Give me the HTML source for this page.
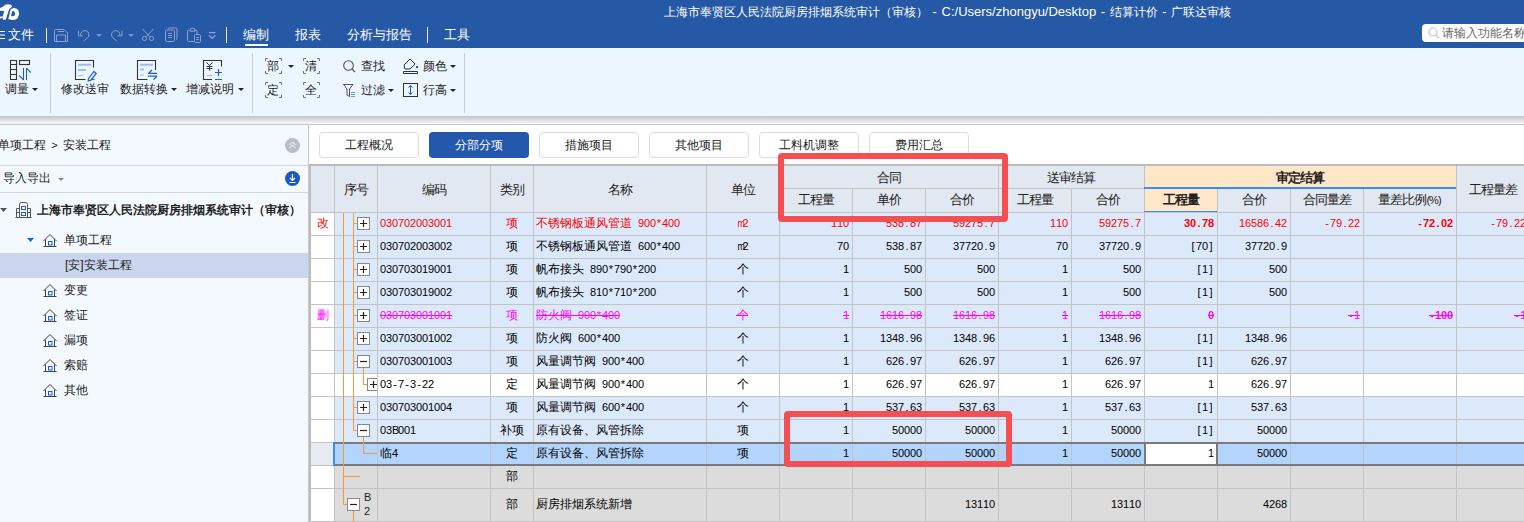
<!DOCTYPE html><html><head><meta charset="utf-8"><style>
*{margin:0;padding:0;box-sizing:border-box}
html,body{width:1524px;height:522px;overflow:hidden;background:#fff}
body{position:relative;font-family:"Liberation Sans",sans-serif;color:#222}
div{position:absolute}
.t{white-space:nowrap;line-height:1}
.m{font-family:"Liberation Mono",monospace;font-size:11px;letter-spacing:-0.6px}
.c{font-size:12px}
.t u{display:inline-block;width:1em;text-decoration:none;text-align:center}
svg{position:absolute;overflow:visible}
.g{font-size:11px;line-height:11px;white-space:nowrap}.g i{display:inline-block;width:6px;text-align:center;font-style:normal}.g b{display:inline-block;width:12px;font-size:12px;font-weight:normal;text-align:center}.gb i{font-weight:bold}.g i.n{transform:scaleX(0.8)}.h u{width:12px}.nf u,.nf .g b{transform:scale(1.45,1.3)}</style></head><body><div style="left:0px;top:0px;width:1524px;height:48px;background:#2559a5"></div>
<svg style="left:0;top:0" width="24" height="24"><path fill-rule="evenodd" fill="#fff" d="M8.3 19.3L10.6 9.6Q11.5 8 14 8Q19 8.3 19 13.8Q18.9 19.9 13.3 19.9Z M11.1 16.2L11.9 12Q12.3 11.1 13.3 11.1Q15.1 11.3 15.1 13.7Q15 16.2 12.9 16.2Z"/><path fill-rule="evenodd" fill="#fff" d="M2.7 19.7L5.9 19.6L8.6 10.8Q9.5 7.6 12.4 6.4Q11.6 4.2 8.2 4.2Q4.8 4.2 3.3 6.5Q1.5 7.6 -0.5 8V18.6Q1.2 18.6 2.9 17.6Z M-0.5 10.8Q1.5 10.4 4.2 11L2.7 16.4Q1.5 16.6 -0.5 16.4Z"/></svg>
<div class="t" style="left:664px;top:5px;color:#fff;font-size:13px;word-spacing:1px"><span style="font-size:12px"><u>上</u><u>海</u><u>市</u><u>奉</u><u>贤</u><u>区</u><u>人</u><u>民</u><u>法</u><u>院</u><u>厨</u><u>房</u><u>排</u><u>烟</u><u>系</u><u>统</u><u>审</u><u>计</u><u>（</u><u>审</u><u>核</u><u>）</u></span> - C:/Users/zhongyu/Desktop - <span style="font-size:12px"><u>结</u><u>算</u><u>计</u><u>价</u></span> - <span style="font-size:12px"><u>广</u><u>联</u><u>达</u><u>审</u><u>核</u></span></div>
<svg style="left:0;top:30px" width="6" height="10"><path d="M0 1.5H5M0 5H5M0 8.5H5" stroke="#fff" stroke-width="1"/></svg>
<div class="t" style="left:8px;top:28px;color:#fff;font-size:13px"><u>文</u><u>件</u></div>
<div style="left:46px;top:28px;width:1px;height:15px;background:#e8eef8"></div>
<svg style="left:54px;top:29px" width="15" height="14"><path d="M0.5 1.5Q0.5 0.5 1.5 0.5H10L13.5 4V12.5H0.5Z M2.5 12.5V6H11.5V12.5 M4 2.5H10" fill="none" stroke="#8aa2d0" stroke-width="1"/></svg>
<svg style="left:77px;top:29px" width="14" height="14"><path d="M3.6 6.2A4.2 4.2 0 1 1 10.6 8.8L6.6 12" fill="none" stroke="#8aa2d0" stroke-width="1"/><path d="M1.5 1.8V6.8H6" fill="none" stroke="#8aa2d0" stroke-width="1"/></svg>
<svg style="left:96px;top:34px" width="6" height="4"><path d="M0 0H6L3 3Z" fill="#6d8fe0"/></svg>
<svg style="left:110px;top:29px" width="14" height="14"><g transform="translate(13.5,0) scale(-1,1)"><path d="M3.6 6.2A4.2 4.2 0 1 1 10.6 8.8L6.6 12" fill="none" stroke="#8aa2d0" stroke-width="1"/><path d="M1.5 1.8V6.8H6" fill="none" stroke="#8aa2d0" stroke-width="1"/></g></svg>
<svg style="left:128px;top:34px" width="6" height="4"><path d="M0 0H6L3 3Z" fill="#6d8fe0"/></svg>
<svg style="left:140px;top:27px" width="16" height="17"><path d="M2.5 2L10 9.8M13.5 2L6 9.8" fill="none" stroke="#8aa2d0" stroke-width="1"/><circle cx="4.5" cy="11.5" r="2.1" fill="none" stroke="#8aa2d0"/><circle cx="11.5" cy="11.5" r="2.1" fill="none" stroke="#8aa2d0"/></svg>
<svg style="left:164px;top:27px" width="15" height="17"><path d="M3.8 1.8Q4 1 5 1H12Q13 1 13 2V11.5Q13 12.5 12 12.6" fill="none" stroke="#8aa2d0"/><rect x="1.5" y="3" width="9" height="11.5" rx="1.2" fill="#2559a5" stroke="#8aa2d0"/><path d="M4 6.5H8M4 8.5H8M4 10.5H8" stroke="#8aa2d0" stroke-width="0.9"/></svg>
<svg style="left:186px;top:27px" width="17" height="17"><path d="M3.5 3H2.5Q1.5 3 1.5 4V13.5Q1.5 14.5 2.5 14.5H8.5M8 3H10Q11 3 11 4V7" fill="none" stroke="#8aa2d0"/><path d="M4 4.2V2.8Q4 1.2 6.5 1.2Q9 1.2 9 2.8V4.2Z" fill="none" stroke="#8aa2d0"/><rect x="8.5" y="7.5" width="6" height="8" rx="1.2" fill="#2559a5" stroke="#8aa2d0"/><path d="M10 10.5H13M10 12.5H13" stroke="#8aa2d0" stroke-width="0.9"/></svg>
<svg style="left:208px;top:31px" width="9" height="9"><path d="M1 1.6H7.5" stroke="#8aa2d0" stroke-width="1.3"/><path d="M1.2 4.3L4.2 7.4L7.3 4.3" fill="none" stroke="#8aa2d0" stroke-width="1.3"/></svg>
<div style="left:226px;top:27px;width:1px;height:16px;background:#e8eef8"></div>
<div class="t" style="left:243px;top:28px;color:#fff;font-size:13px"><u>编</u><u>制</u></div>
<div style="left:245px;top:44px;width:23px;height:2px;background:#fff"></div>
<div class="t" style="left:295px;top:28px;color:#fff;font-size:13px"><u>报</u><u>表</u></div>
<div class="t" style="left:347px;top:28px;color:#fff;font-size:13px"><u>分</u><u>析</u><u>与</u><u>报</u><u>告</u></div>
<div style="left:427px;top:27px;width:1px;height:16px;background:#e8eef8"></div>
<div class="t" style="left:444px;top:28px;color:#fff;font-size:13px"><u>工</u><u>具</u></div>
<div style="left:1422px;top:24px;width:110px;height:18px;background:#fff;border-radius:4px"></div>
<svg style="left:1428px;top:27px" width="12" height="12"><circle cx="5" cy="5" r="4" fill="none" stroke="#c8c8c8" stroke-width="1.2"/><path d="M8 8L11 11" stroke="#c8c8c8" stroke-width="1.5"/></svg>
<div class="t" style="left:1442px;top:27px;color:#666;font-size:12px"><u>请</u><u>输</u><u>入</u><u>功</u><u>能</u><u>名</u><u>称</u></div>
<div style="left:0px;top:48px;width:1524px;height:68px;background:#ecf6fe"></div>
<div style="left:0px;top:116px;width:1524px;height:8px;background:linear-gradient(#c3c4c9,#fafafa)"></div>
<div style="left:0px;top:124px;width:1524px;height:1px;background:#c6c7cb"></div>
<div style="left:50px;top:53px;width:1px;height:60px;background:#c9cdd2"></div>
<div style="left:252px;top:53px;width:1px;height:60px;background:#c9cdd2"></div>
<div style="left:464px;top:53px;width:1px;height:60px;background:#c9cdd2"></div>
<svg style="left:10px;top:60px" width="24" height="22"><path d="M0.5 0.5H6.5V19.5H0.5Z M0.5 4.5H6.5M0.5 9.5H6.5M0.5 14.5H6.5" fill="none" stroke="#333" stroke-width="1.1"/><rect x="9.5" y="0.5" width="10" height="4" fill="none" stroke="#333" stroke-width="1.1"/><path d="M13.5 8V20M9.2 15.5L13.5 19.8 M16.5 8V20M16.5 8.2L20.7 12.5" fill="none" stroke="#1a5fd0" stroke-width="1.1"/></svg>
<div class="t" style="left:5px;top:83px;font-size:12px;color:#222"><u>调</u><u>量</u></div>
<svg style="left:32px;top:88px" width="6" height="4"><path d="M0 0H6L3 3Z" fill="#222"/></svg>
<svg style="left:75px;top:60px" width="24" height="24"><path d="M18.5 7.5V0.5H0.5V19.5H10.5" fill="none" stroke="#333" stroke-width="1.1"/><path d="M3 4.8H16M3 10H11" stroke="#9dbcf5" stroke-width="2"/><path d="M3 15.5H8" stroke="#9dbcf5" stroke-width="1"/><path d="M13.5 18.5L19 11.5L21.2 13.5L15.6 20.4L13.2 21Z" fill="none" stroke="#1a5fd0" stroke-width="1.2"/><path d="M16.5 19.5H19.5" stroke="#1a5fd0" stroke-width="1.2"/></svg>
<div class="t" style="left:61px;top:83px;font-size:12px"><u>修</u><u>改</u><u>送</u><u>审</u></div>
<svg style="left:137px;top:60px" width="24" height="24"><path d="M18.5 10V0.5H0.5V19.5H10.5" fill="none" stroke="#333" stroke-width="1.1"/><path d="M3 4.8H16M3 9.5H7" stroke="#9dbcf5" stroke-width="2"/><path d="M3 15H7" stroke="#9dbcf5" stroke-width="1"/><path d="M11 13.4H20M12 13L15 10M11 16.2H20M20 16.2L16.5 19.5" fill="none" stroke="#1a5fd0" stroke-width="1.2"/></svg>
<div class="t" style="left:120px;top:83px;font-size:12px"><u>数</u><u>据</u><u>转</u><u>换</u></div>
<svg style="left:171px;top:88px" width="6" height="4"><path d="M0 0H6L3 3Z" fill="#222"/></svg>
<svg style="left:203px;top:60px" width="24" height="24"><path d="M18.5 6.5V0.5H0.5V19.5H9" fill="none" stroke="#333" stroke-width="1.1"/><path d="M3.5 2.5L6.5 5.5L9.5 2.5M6.5 5.5V10.5M3.5 6.5H9.5M3.5 8.5H9.5" fill="none" stroke="#333" stroke-width="1"/><path d="M4 15.5H9" stroke="#9dbcf5" stroke-width="1.2"/><path d="M12 12.5H19M15.5 9V16M12 19.5H19" stroke="#1a5fd0" stroke-width="1.2"/></svg>
<div class="t" style="left:186px;top:83px;font-size:12px"><u>增</u><u>减</u><u>说</u><u>明</u></div>
<svg style="left:238px;top:88px" width="6" height="4"><path d="M0 0H6L3 3Z" fill="#222"/></svg>
<svg style="left:265px;top:58px" width="17" height="16"><path d="M3 0.5H0.5V3 M14 0.5H16.5V3 M0.5 13V15.5H3 M16.5 13V15.5H14" fill="none" stroke="#777"/></svg>
<div class="t" style="left:267px;top:60px;font-size:12px"><u>部</u></div>
<svg style="left:303px;top:58px" width="17" height="16"><path d="M3 0.5H0.5V3 M14 0.5H16.5V3 M0.5 13V15.5H3 M16.5 13V15.5H14" fill="none" stroke="#777"/></svg>
<div class="t" style="left:305px;top:60px;font-size:12px"><u>清</u></div>
<svg style="left:265px;top:82px" width="17" height="16"><path d="M3 0.5H0.5V3 M14 0.5H16.5V3 M0.5 13V15.5H3 M16.5 13V15.5H14" fill="none" stroke="#777"/></svg>
<div class="t" style="left:267px;top:84px;font-size:12px"><u>定</u></div>
<svg style="left:303px;top:82px" width="17" height="16"><path d="M3 0.5H0.5V3 M14 0.5H16.5V3 M0.5 13V15.5H3 M16.5 13V15.5H14" fill="none" stroke="#777"/></svg>
<div class="t" style="left:305px;top:84px;font-size:12px"><u>全</u></div>
<svg style="left:288px;top:65px" width="6" height="4"><path d="M0 0H6L3 3Z" fill="#222"/></svg>
<svg style="left:343px;top:60px" width="13" height="13"><circle cx="5.5" cy="5.5" r="4.8" fill="none" stroke="#555" stroke-width="1.1"/><path d="M9 9L12 12" stroke="#555" stroke-width="1.3"/></svg>
<div class="t" style="left:361px;top:60px;font-size:12px"><u>查</u><u>找</u></div>
<svg style="left:343px;top:84px" width="14" height="13"><path d="M0.5 0.5H10L6.5 5V12.5L4 11V5Z" fill="none" stroke="#555"/><path d="M8 8.5H12M8 10.5H12M8 12.5H12" stroke="#1a5fd0" stroke-width="0.6"/></svg>
<div class="t" style="left:361px;top:84px;font-size:12px"><u>过</u><u>滤</u></div>
<svg style="left:388px;top:89px" width="6" height="4"><path d="M0 0H6L3 3Z" fill="#222"/></svg>
<svg style="left:403px;top:58px" width="16" height="16"><path d="M1 7L7 1L12 6L7 11H2Z" fill="none" stroke="#333"/><path d="M0.5 13.5H14.5V15.5H0.5Z" fill="none" stroke="#333"/><rect x="13" y="8" width="2" height="2" fill="#1a5fd0"/></svg>
<div class="t" style="left:423px;top:60px;font-size:12px"><u>颜</u><u>色</u></div>
<svg style="left:450px;top:65px" width="6" height="4"><path d="M0 0H6L3 3Z" fill="#222"/></svg>
<svg style="left:403px;top:83px" width="16" height="14"><rect x="0.5" y="0.5" width="14" height="13" fill="none" stroke="#333"/><path d="M7.5 2.5V11.5M5.5 4.5L7.5 2.5L9.5 4.5M5.5 9.5L7.5 11.5L9.5 9.5" fill="none" stroke="#1a5fd0"/></svg>
<div class="t" style="left:423px;top:84px;font-size:12px"><u>行</u><u>高</u></div>
<svg style="left:450px;top:89px" width="6" height="4"><path d="M0 0H6L3 3Z" fill="#222"/></svg>
<div style="left:0px;top:125px;width:308px;height:397px;background:#f3f9fe"></div>
<div style="left:308px;top:125px;width:1px;height:397px;background:#c8c8c8"></div>
<div class="t" style="left:-2px;top:139px;font-size:12px"><u>单</u><u>项</u><u>工</u><u>程</u> <span style="font-size:11px;margin:0 2px">&gt;</span> <u>安</u><u>装</u><u>工</u><u>程</u></div>
<svg style="left:285px;top:138px" width="15" height="15"><circle cx="7.5" cy="7.5" r="7.5" fill="#b9bfc9"/><path d="M4.5 7L7.5 4L10.5 7M4.5 10L7.5 7L10.5 10" fill="none" stroke="#fff" stroke-width="1"/></svg>
<div style="left:0px;top:165px;width:308px;height:1px;background:#d4d7db"></div>
<div class="t" style="left:3px;top:172px;font-size:12px"><u>导</u><u>入</u><u>导</u><u>出</u></div>
<svg style="left:58px;top:178px" width="6" height="4"><path d="M0 0H6L3 3Z" fill="#888"/></svg>
<svg style="left:285px;top:171px" width="15" height="15"><circle cx="7.5" cy="7.5" r="7.5" fill="#1958c9"/><path d="M7.5 3V9.5M5 7L7.5 9.5L10 7M4.5 11.5H10.5" fill="none" stroke="#fff" stroke-width="1.2"/></svg>
<div style="left:0px;top:192px;width:308px;height:1px;background:#d4d7db"></div>
<svg style="left:0;top:208px" width="7" height="5"><path d="M0 0H7L3.5 4Z" fill="#555"/></svg>
<svg style="left:15px;top:202px" width="17" height="17"><path d="M0.5 15.5H16.5 M4.5 15V2.5Q4.5 0.5 6.5 0.5H10.5Q12.5 0.5 12.5 2.5V15 M1.5 15V6.5H4.5M1.5 10.5H4.5 M12.5 6.5H15.5V15M12.5 10.5H15.5" fill="none" stroke="#555"/><rect x="6.5" y="4.5" width="4" height="3" fill="none" stroke="#1a5fd0"/><rect x="6.5" y="10.5" width="4" height="3" fill="none" stroke="#1a5fd0"/></svg>
<div class="t" style="left:37px;top:204px;font-size:12px;font-weight:bold"><u>上</u><u>海</u><u>市</u><u>奉</u><u>贤</u><u>区</u><u>人</u><u>民</u><u>法</u><u>院</u><u>厨</u><u>房</u><u>排</u><u>烟</u><u>系</u><u>统</u><u>审</u><u>计</u><u>（</u><u>审</u><u>核</u><u>）</u></div>
<svg style="left:27px;top:238px" width="7" height="5"><path d="M0 0H7L3.5 4Z" fill="#1a5fe0"/></svg>
<svg style="left:43px;top:234px" width="15" height="15"><path d="M0.5 7L7 0.5L13.5 7 M2.5 5.5V12.5H11.5V5.5 M0.5 12.5H13.5" fill="none" stroke="#444" stroke-width="1"/><rect x="5.5" y="7.5" width="3.5" height="3.5" fill="none" stroke="#1a5fd0" stroke-width="1"/></svg>
<div class="t" style="left:64px;top:234px;font-size:12px"><u>单</u><u>项</u><u>工</u><u>程</u></div>
<div style="left:0px;top:253px;width:308px;height:25px;background:#c9d6ee"></div>
<div class="t" style="left:65px;top:259px;font-size:12px">[<u>安</u>]<u>安</u><u>装</u><u>工</u><u>程</u></div>
<svg style="left:43px;top:284px" width="15" height="15"><path d="M0.5 7L7 0.5L13.5 7 M2.5 5.5V12.5H11.5V5.5 M0.5 12.5H13.5" fill="none" stroke="#444" stroke-width="1"/><rect x="5.5" y="7.5" width="3.5" height="3.5" fill="none" stroke="#1a5fd0" stroke-width="1"/></svg>
<div class="t" style="left:64px;top:284px;font-size:12px"><u>变</u><u>更</u></div>
<svg style="left:43px;top:309px" width="15" height="15"><path d="M0.5 7L7 0.5L13.5 7 M2.5 5.5V12.5H11.5V5.5 M0.5 12.5H13.5" fill="none" stroke="#444" stroke-width="1"/><rect x="5.5" y="7.5" width="3.5" height="3.5" fill="none" stroke="#1a5fd0" stroke-width="1"/></svg>
<div class="t" style="left:64px;top:309px;font-size:12px"><u>签</u><u>证</u></div>
<svg style="left:43px;top:334px" width="15" height="15"><path d="M0.5 7L7 0.5L13.5 7 M2.5 5.5V12.5H11.5V5.5 M0.5 12.5H13.5" fill="none" stroke="#444" stroke-width="1"/><rect x="5.5" y="7.5" width="3.5" height="3.5" fill="none" stroke="#1a5fd0" stroke-width="1"/></svg>
<div class="t" style="left:64px;top:334px;font-size:12px"><u>漏</u><u>项</u></div>
<svg style="left:43px;top:359px" width="15" height="15"><path d="M0.5 7L7 0.5L13.5 7 M2.5 5.5V12.5H11.5V5.5 M0.5 12.5H13.5" fill="none" stroke="#444" stroke-width="1"/><rect x="5.5" y="7.5" width="3.5" height="3.5" fill="none" stroke="#1a5fd0" stroke-width="1"/></svg>
<div class="t" style="left:64px;top:359px;font-size:12px"><u>索</u><u>赔</u></div>
<svg style="left:43px;top:384px" width="15" height="15"><path d="M0.5 7L7 0.5L13.5 7 M2.5 5.5V12.5H11.5V5.5 M0.5 12.5H13.5" fill="none" stroke="#444" stroke-width="1"/><rect x="5.5" y="7.5" width="3.5" height="3.5" fill="none" stroke="#1a5fd0" stroke-width="1"/></svg>
<div class="t" style="left:64px;top:384px;font-size:12px"><u>其</u><u>他</u></div>
<div style="left:309px;top:125px;width:1215px;height:39px;background:#fff"></div>
<div style="left:319px;top:132px;width:100px;height:26px;background:#fff;border:1px solid #dcdcdc;border-radius:4px"></div>
<div class="t" style="left:319px;top:139px;width:100px;text-align:center;font-size:12px;color:#222"><u>工</u><u>程</u><u>概</u><u>况</u></div>
<div style="left:429px;top:132px;width:100px;height:26px;background:#2358ad;border-radius:4px"></div>
<div class="t" style="left:429px;top:139px;width:100px;text-align:center;font-size:12px;color:#fff"><u>分</u><u>部</u><u>分</u><u>项</u></div>
<div style="left:539px;top:132px;width:100px;height:26px;background:#fff;border:1px solid #dcdcdc;border-radius:4px"></div>
<div class="t" style="left:539px;top:139px;width:100px;text-align:center;font-size:12px;color:#222"><u>措</u><u>施</u><u>项</u><u>目</u></div>
<div style="left:649px;top:132px;width:100px;height:26px;background:#fff;border:1px solid #dcdcdc;border-radius:4px"></div>
<div class="t" style="left:649px;top:139px;width:100px;text-align:center;font-size:12px;color:#222"><u>其</u><u>他</u><u>项</u><u>目</u></div>
<div style="left:759px;top:132px;width:100px;height:26px;background:#fff;border:1px solid #dcdcdc;border-radius:4px"></div>
<div class="t" style="left:759px;top:139px;width:100px;text-align:center;font-size:12px;color:#222"><u>工</u><u>料</u><u>机</u><u>调</u><u>整</u></div>
<div style="left:869px;top:132px;width:100px;height:26px;background:#fff;border:1px solid #dcdcdc;border-radius:4px"></div>
<div class="t" style="left:869px;top:139px;width:100px;text-align:center;font-size:12px;color:#222"><u>费</u><u>用</u><u>汇</u><u>总</u></div>
<div style="left:309px;top:164px;width:1215px;height:358px;background:#fff"></div>
<div style="left:311px;top:166px;width:1213px;height:46px;background:#e2e8f1"></div>
<div style="left:1145px;top:166px;width:311px;height:21px;background:#fee6c8"></div>
<div style="left:1145px;top:189px;width:72px;height:22px;background:#fee6c8"></div>
<div style="left:334px;top:213px;width:1190px;height:22px;background:#dce9fb"></div>
<div style="left:334px;top:236px;width:1190px;height:22px;background:#dce9fb"></div>
<div style="left:334px;top:259px;width:1190px;height:22px;background:#dce9fb"></div>
<div style="left:334px;top:282px;width:1190px;height:22px;background:#dce9fb"></div>
<div style="left:334px;top:305px;width:1190px;height:22px;background:#dce9fb"></div>
<div style="left:334px;top:328px;width:1190px;height:22px;background:#dce9fb"></div>
<div style="left:334px;top:351px;width:1190px;height:22px;background:#dce9fb"></div>
<div style="left:334px;top:374px;width:1190px;height:22px;background:#fff"></div>
<div style="left:334px;top:397px;width:1190px;height:22px;background:#dce9fb"></div>
<div style="left:334px;top:420px;width:1190px;height:22px;background:#dce9fb"></div>
<div style="left:334px;top:443px;width:1190px;height:22px;background:#b3d5fd"></div>
<div style="left:311px;top:442px;width:22px;height:23px;background:#e5eaf3"></div>
<div style="left:334px;top:466px;width:1190px;height:22px;background:#dcdcdc"></div>
<div style="left:334px;top:489px;width:1190px;height:32px;background:#dcdcdc"></div>
<div style="left:334px;top:166px;width:1px;height:356px;background:#c3c3c3"></div>
<div style="left:377px;top:166px;width:1px;height:356px;background:#c3c3c3"></div>
<div style="left:490px;top:166px;width:1px;height:356px;background:#c3c3c3"></div>
<div style="left:533px;top:166px;width:1px;height:356px;background:#c3c3c3"></div>
<div style="left:706px;top:166px;width:1px;height:356px;background:#c3c3c3"></div>
<div style="left:779px;top:166px;width:1px;height:356px;background:#c3c3c3"></div>
<div style="left:852px;top:166px;width:1px;height:356px;background:#c3c3c3"></div>
<div style="left:925px;top:166px;width:1px;height:356px;background:#c3c3c3"></div>
<div style="left:998px;top:166px;width:1px;height:356px;background:#c3c3c3"></div>
<div style="left:1071px;top:166px;width:1px;height:356px;background:#c3c3c3"></div>
<div style="left:1144px;top:166px;width:1px;height:356px;background:#c3c3c3"></div>
<div style="left:1217px;top:166px;width:1px;height:356px;background:#c3c3c3"></div>
<div style="left:1290px;top:166px;width:1px;height:356px;background:#c3c3c3"></div>
<div style="left:1363px;top:166px;width:1px;height:356px;background:#c3c3c3"></div>
<div style="left:1456px;top:166px;width:1px;height:356px;background:#c3c3c3"></div>
<div style="left:780px;top:166px;width:218px;height:22px;background:#e2e8f1"></div>
<div style="left:999px;top:166px;width:145px;height:22px;background:#e2e8f1"></div>
<div style="left:1145px;top:166px;width:311px;height:21px;background:#fee6c8"></div>
<div style="left:779px;top:188px;width:677px;height:1px;background:#c3c3c3"></div>
<div style="left:1144px;top:187px;width:312px;height:2px;background:#3a8ef0"></div>
<div style="left:1144px;top:211px;width:73px;height:2px;background:#3a8ef0"></div>
<div style="left:311px;top:212px;width:1213px;height:1px;background:#c3c3c3"></div>
<div style="left:311px;top:235px;width:1213px;height:1px;background:#c3c3c3"></div>
<div style="left:311px;top:258px;width:1213px;height:1px;background:#c3c3c3"></div>
<div style="left:311px;top:281px;width:1213px;height:1px;background:#c3c3c3"></div>
<div style="left:311px;top:304px;width:1213px;height:1px;background:#c3c3c3"></div>
<div style="left:311px;top:327px;width:1213px;height:1px;background:#c3c3c3"></div>
<div style="left:311px;top:350px;width:1213px;height:1px;background:#c3c3c3"></div>
<div style="left:311px;top:373px;width:1213px;height:1px;background:#c3c3c3"></div>
<div style="left:311px;top:396px;width:1213px;height:1px;background:#c3c3c3"></div>
<div style="left:311px;top:419px;width:1213px;height:1px;background:#c3c3c3"></div>
<div style="left:311px;top:442px;width:1213px;height:1px;background:#c3c3c3"></div>
<div style="left:311px;top:465px;width:1213px;height:1px;background:#c3c3c3"></div>
<div style="left:311px;top:488px;width:1213px;height:1px;background:#c3c3c3"></div>
<div style="left:311px;top:521px;width:1213px;height:1px;background:#c3c3c3"></div>
<div style="left:335px;top:442px;width:1189px;height:2px;background:#7a7a7a"></div>
<div style="left:335px;top:464px;width:1189px;height:2px;background:#7a7a7a"></div>
<div style="left:333px;top:442px;width:2px;height:24px;background:#3a8ef0"></div>
<div style="left:1145px;top:444px;width:72px;height:20px;background:#fff"></div>
<div style="left:1144px;top:442px;width:74px;height:24px;border:2px solid #7a7a7a;background:transparent"></div>
<div style="left:309px;top:164px;width:1215px;height:2px;background:#bdbdbd"></div>
<div style="left:309px;top:164px;width:2px;height:358px;background:#bdbdbd"></div>
<div class="t h" style="left:334px;top:183px;width:43px;text-align:center;font-size:13px;color:#222;"><u>序</u><u>号</u></div>
<div class="t h" style="left:377px;top:183px;width:113px;text-align:center;font-size:13px;color:#222;"><u>编</u><u>码</u></div>
<div class="t h" style="left:490px;top:183px;width:43px;text-align:center;font-size:13px;color:#222;"><u>类</u><u>别</u></div>
<div class="t h" style="left:533px;top:183px;width:173px;text-align:center;font-size:13px;color:#222;"><u>名</u><u>称</u></div>
<div class="t h" style="left:706px;top:183px;width:73px;text-align:center;font-size:13px;color:#222;"><u>单</u><u>位</u></div>
<div class="t h" style="left:779px;top:171px;width:219px;text-align:center;font-size:13px;color:#222;"><u>合</u><u>同</u></div>
<div class="t h" style="left:779px;top:193px;width:73px;text-align:center;font-size:13px;color:#222;"><u>工</u><u>程</u><u>量</u></div>
<div class="t h" style="left:852px;top:193px;width:73px;text-align:center;font-size:13px;color:#222;"><u>单</u><u>价</u></div>
<div class="t h" style="left:925px;top:193px;width:73px;text-align:center;font-size:13px;color:#222;"><u>合</u><u>价</u></div>
<div class="t h" style="left:998px;top:171px;width:146px;text-align:center;font-size:13px;color:#222;"><u>送</u><u>审</u><u>结</u><u>算</u></div>
<div class="t h" style="left:998px;top:193px;width:73px;text-align:center;font-size:13px;color:#222;"><u>工</u><u>程</u><u>量</u></div>
<div class="t h" style="left:1071px;top:193px;width:73px;text-align:center;font-size:13px;color:#222;"><u>合</u><u>价</u></div>
<div class="t h" style="left:1144px;top:171px;width:312px;text-align:center;font-size:13px;color:#222;font-weight:bold"><u>审</u><u>定</u><u>结</u><u>算</u></div>
<div class="t h" style="left:1144px;top:193px;width:73px;text-align:center;font-size:13px;color:#222;font-weight:bold"><u>工</u><u>程</u><u>量</u></div>
<div class="t h" style="left:1217px;top:193px;width:73px;text-align:center;font-size:13px;color:#222;"><u>合</u><u>价</u></div>
<div class="t h" style="left:1290px;top:193px;width:73px;text-align:center;font-size:13px;color:#222;"><u>合</u><u>同</u><u>量</u><u>差</u></div>
<div class="t h" style="left:1363px;top:193px;width:93px;text-align:center;font-size:13px;color:#222;"><u>量</u><u>差</u><u>比</u><u>例</u><span style="font-size:11px;letter-spacing:-1px">(%)</span></div>
<div class="t h" style="left:1456px;top:183px;width:73px;text-align:center;font-size:13px;color:#222;"><u>工</u><u>程</u><u>量</u><u>差</u></div>
<div class="t" style="left:311px;top:217px;width:23px;text-align:center;font-size:12px;color:#ff0000"><u>改</u></div>
<div class="g" style="left:380px;top:218px;color:#ff0000"><i>0</i><i>3</i><i>0</i><i>7</i><i>0</i><i>2</i><i>0</i><i>0</i><i>3</i><i>0</i><i>0</i><i>1</i></div>
<div class="g" style="left:490px;top:218px;width:43px;text-align:center;color:#ff0000"><b>项</b></div>
<div class="g" style="left:536px;top:218px;color:#ff0000"><b>不</b><b>锈</b><b>钢</b><b>板</b><b>通</b><b>风</b><b>管</b><b>道</b><i> </i><i>9</i><i>0</i><i>0</i><i>*</i><i>4</i><i>0</i><i>0</i></div>
<div class="g" style="left:706px;top:218px;width:73px;text-align:center;color:#ff0000"><i class="n">m</i><i>2</i></div>
<div class="g" style="left:779px;top:218px;width:70px;text-align:right;color:#ff0000"><i>1</i><i>1</i><i>0</i></div>
<div class="g" style="left:852px;top:218px;width:70px;text-align:right;color:#ff0000"><i>5</i><i>3</i><i>8</i><i>.</i><i>8</i><i>7</i></div>
<div class="g" style="left:925px;top:218px;width:70px;text-align:right;color:#ff0000"><i>5</i><i>9</i><i>2</i><i>7</i><i>5</i><i>.</i><i>7</i></div>
<div class="g" style="left:998px;top:218px;width:70px;text-align:right;color:#ff0000"><i>1</i><i>1</i><i>0</i></div>
<div class="g" style="left:1071px;top:218px;width:70px;text-align:right;color:#ff0000"><i>5</i><i>9</i><i>2</i><i>7</i><i>5</i><i>.</i><i>7</i></div>
<div class="g gb" style="left:1144px;top:218px;width:70px;text-align:right;color:#ff0000"><i>3</i><i>0</i><i>.</i><i>7</i><i>8</i></div>
<div class="g" style="left:1217px;top:218px;width:70px;text-align:right;color:#ff0000"><i>1</i><i>6</i><i>5</i><i>8</i><i>6</i><i>.</i><i>4</i><i>2</i></div>
<div class="g" style="left:1290px;top:218px;width:70px;text-align:right;color:#ff0000"><i>-</i><i>7</i><i>9</i><i>.</i><i>2</i><i>2</i></div>
<div class="g gb" style="left:1363px;top:218px;width:90px;text-align:right;color:#ff0000"><i>-</i><i>7</i><i>2</i><i>.</i><i>0</i><i>2</i></div>
<div class="g" style="left:1456px;top:218px;width:70px;text-align:right;color:#ff0000"><i>-</i><i>7</i><i>9</i><i>.</i><i>2</i><i>2</i></div>
<div class="g" style="left:380px;top:241px;color:#000"><i>0</i><i>3</i><i>0</i><i>7</i><i>0</i><i>2</i><i>0</i><i>0</i><i>3</i><i>0</i><i>0</i><i>2</i></div>
<div class="g" style="left:490px;top:241px;width:43px;text-align:center;color:#000"><b>项</b></div>
<div class="g" style="left:536px;top:241px;color:#000"><b>不</b><b>锈</b><b>钢</b><b>板</b><b>通</b><b>风</b><b>管</b><b>道</b><i> </i><i>6</i><i>0</i><i>0</i><i>*</i><i>4</i><i>0</i><i>0</i></div>
<div class="g" style="left:706px;top:241px;width:73px;text-align:center;color:#000"><i class="n">m</i><i>2</i></div>
<div class="g" style="left:779px;top:241px;width:70px;text-align:right;color:#000"><i>7</i><i>0</i></div>
<div class="g" style="left:852px;top:241px;width:70px;text-align:right;color:#000"><i>5</i><i>3</i><i>8</i><i>.</i><i>8</i><i>7</i></div>
<div class="g" style="left:925px;top:241px;width:70px;text-align:right;color:#000"><i>3</i><i>7</i><i>7</i><i>2</i><i>0</i><i>.</i><i>9</i></div>
<div class="g" style="left:998px;top:241px;width:70px;text-align:right;color:#000"><i>7</i><i>0</i></div>
<div class="g" style="left:1071px;top:241px;width:70px;text-align:right;color:#000"><i>3</i><i>7</i><i>7</i><i>2</i><i>0</i><i>.</i><i>9</i></div>
<div class="g" style="left:1144px;top:241px;width:70px;text-align:right;color:#000"><i>[</i><i>7</i><i>0</i><i>]</i></div>
<div class="g" style="left:1217px;top:241px;width:70px;text-align:right;color:#000"><i>3</i><i>7</i><i>7</i><i>2</i><i>0</i><i>.</i><i>9</i></div>
<div class="g" style="left:380px;top:264px;color:#000"><i>0</i><i>3</i><i>0</i><i>7</i><i>0</i><i>3</i><i>0</i><i>1</i><i>9</i><i>0</i><i>0</i><i>1</i></div>
<div class="g" style="left:490px;top:264px;width:43px;text-align:center;color:#000"><b>项</b></div>
<div class="g" style="left:536px;top:264px;color:#000"><b>帆</b><b>布</b><b>接</b><b>头</b><i> </i><i>8</i><i>9</i><i>0</i><i>*</i><i>7</i><i>9</i><i>0</i><i>*</i><i>2</i><i>0</i><i>0</i></div>
<div class="g" style="left:706px;top:264px;width:73px;text-align:center;color:#000"><b>个</b></div>
<div class="g" style="left:779px;top:264px;width:70px;text-align:right;color:#000"><i>1</i></div>
<div class="g" style="left:852px;top:264px;width:70px;text-align:right;color:#000"><i>5</i><i>0</i><i>0</i></div>
<div class="g" style="left:925px;top:264px;width:70px;text-align:right;color:#000"><i>5</i><i>0</i><i>0</i></div>
<div class="g" style="left:998px;top:264px;width:70px;text-align:right;color:#000"><i>1</i></div>
<div class="g" style="left:1071px;top:264px;width:70px;text-align:right;color:#000"><i>5</i><i>0</i><i>0</i></div>
<div class="g" style="left:1144px;top:264px;width:70px;text-align:right;color:#000"><i>[</i><i>1</i><i>]</i></div>
<div class="g" style="left:1217px;top:264px;width:70px;text-align:right;color:#000"><i>5</i><i>0</i><i>0</i></div>
<div class="g" style="left:380px;top:287px;color:#000"><i>0</i><i>3</i><i>0</i><i>7</i><i>0</i><i>3</i><i>0</i><i>1</i><i>9</i><i>0</i><i>0</i><i>2</i></div>
<div class="g" style="left:490px;top:287px;width:43px;text-align:center;color:#000"><b>项</b></div>
<div class="g" style="left:536px;top:287px;color:#000"><b>帆</b><b>布</b><b>接</b><b>头</b><i> </i><i>8</i><i>1</i><i>0</i><i>*</i><i>7</i><i>1</i><i>0</i><i>*</i><i>2</i><i>0</i><i>0</i></div>
<div class="g" style="left:706px;top:287px;width:73px;text-align:center;color:#000"><b>个</b></div>
<div class="g" style="left:779px;top:287px;width:70px;text-align:right;color:#000"><i>1</i></div>
<div class="g" style="left:852px;top:287px;width:70px;text-align:right;color:#000"><i>5</i><i>0</i><i>0</i></div>
<div class="g" style="left:925px;top:287px;width:70px;text-align:right;color:#000"><i>5</i><i>0</i><i>0</i></div>
<div class="g" style="left:998px;top:287px;width:70px;text-align:right;color:#000"><i>1</i></div>
<div class="g" style="left:1071px;top:287px;width:70px;text-align:right;color:#000"><i>5</i><i>0</i><i>0</i></div>
<div class="g" style="left:1144px;top:287px;width:70px;text-align:right;color:#000"><i>[</i><i>1</i><i>]</i></div>
<div class="g" style="left:1217px;top:287px;width:70px;text-align:right;color:#000"><i>5</i><i>0</i><i>0</i></div>
<div class="t" style="left:311px;top:309px;width:23px;text-align:center;font-size:12px;color:#ff00ff"><u>删</u></div>
<div class="g" style="left:380px;top:310px;color:#ff00ff"><i>0</i><i>3</i><i>0</i><i>7</i><i>0</i><i>3</i><i>0</i><i>0</i><i>1</i><i>0</i><i>0</i><i>1</i></div>
<div style="left:380px;top:315px;width:72px;height:1px;background:#ff00ff"></div>
<div class="g" style="left:490px;top:310px;width:43px;text-align:center;color:#ff00ff"><b>项</b></div>
<div class="g" style="left:536px;top:310px;color:#ff00ff"><b>防</b><b>火</b><b>阀</b><i> </i><i>9</i><i>0</i><i>0</i><i>*</i><i>4</i><i>0</i><i>0</i></div>
<div style="left:536px;top:315px;width:84px;height:1px;background:#ff00ff"></div>
<div class="g" style="left:706px;top:310px;width:73px;text-align:center;color:#ff00ff"><b>个</b></div>
<div style="left:736px;top:315px;width:12px;height:1px;background:#ff00ff"></div>
<div class="g" style="left:779px;top:310px;width:70px;text-align:right;color:#ff00ff"><i>1</i></div>
<div style="left:843px;top:315px;width:6px;height:1px;background:#ff00ff"></div>
<div class="g" style="left:852px;top:310px;width:70px;text-align:right;color:#ff00ff"><i>1</i><i>6</i><i>1</i><i>6</i><i>.</i><i>9</i><i>8</i></div>
<div style="left:880px;top:315px;width:42px;height:1px;background:#ff00ff"></div>
<div class="g" style="left:925px;top:310px;width:70px;text-align:right;color:#ff00ff"><i>1</i><i>6</i><i>1</i><i>6</i><i>.</i><i>9</i><i>8</i></div>
<div style="left:953px;top:315px;width:42px;height:1px;background:#ff00ff"></div>
<div class="g" style="left:998px;top:310px;width:70px;text-align:right;color:#ff00ff"><i>1</i></div>
<div style="left:1062px;top:315px;width:6px;height:1px;background:#ff00ff"></div>
<div class="g" style="left:1071px;top:310px;width:70px;text-align:right;color:#ff00ff"><i>1</i><i>6</i><i>1</i><i>6</i><i>.</i><i>9</i><i>8</i></div>
<div style="left:1099px;top:315px;width:42px;height:1px;background:#ff00ff"></div>
<div class="g gb" style="left:1144px;top:310px;width:70px;text-align:right;color:#ff00ff"><i>0</i></div>
<div style="left:1208px;top:315px;width:6px;height:1px;background:#ff00ff"></div>
<div class="g" style="left:1290px;top:310px;width:70px;text-align:right;color:#ff00ff"><i>-</i><i>1</i></div>
<div style="left:1348px;top:315px;width:12px;height:1px;background:#ff00ff"></div>
<div class="g gb" style="left:1363px;top:310px;width:90px;text-align:right;color:#ff00ff"><i>-</i><i>1</i><i>0</i><i>0</i></div>
<div style="left:1429px;top:315px;width:24px;height:1px;background:#ff00ff"></div>
<div class="g" style="left:1456px;top:310px;width:70px;text-align:right;color:#ff00ff"><i>-</i><i>1</i></div>
<div style="left:1514px;top:315px;width:12px;height:1px;background:#ff00ff"></div>
<div class="g" style="left:380px;top:333px;color:#000"><i>0</i><i>3</i><i>0</i><i>7</i><i>0</i><i>3</i><i>0</i><i>0</i><i>1</i><i>0</i><i>0</i><i>2</i></div>
<div class="g" style="left:490px;top:333px;width:43px;text-align:center;color:#000"><b>项</b></div>
<div class="g" style="left:536px;top:333px;color:#000"><b>防</b><b>火</b><b>阀</b><i> </i><i>6</i><i>0</i><i>0</i><i>*</i><i>4</i><i>0</i><i>0</i></div>
<div class="g" style="left:706px;top:333px;width:73px;text-align:center;color:#000"><b>个</b></div>
<div class="g" style="left:779px;top:333px;width:70px;text-align:right;color:#000"><i>1</i></div>
<div class="g" style="left:852px;top:333px;width:70px;text-align:right;color:#000"><i>1</i><i>3</i><i>4</i><i>8</i><i>.</i><i>9</i><i>6</i></div>
<div class="g" style="left:925px;top:333px;width:70px;text-align:right;color:#000"><i>1</i><i>3</i><i>4</i><i>8</i><i>.</i><i>9</i><i>6</i></div>
<div class="g" style="left:998px;top:333px;width:70px;text-align:right;color:#000"><i>1</i></div>
<div class="g" style="left:1071px;top:333px;width:70px;text-align:right;color:#000"><i>1</i><i>3</i><i>4</i><i>8</i><i>.</i><i>9</i><i>6</i></div>
<div class="g" style="left:1144px;top:333px;width:70px;text-align:right;color:#000"><i>[</i><i>1</i><i>]</i></div>
<div class="g" style="left:1217px;top:333px;width:70px;text-align:right;color:#000"><i>1</i><i>3</i><i>4</i><i>8</i><i>.</i><i>9</i><i>6</i></div>
<div class="g" style="left:380px;top:356px;color:#000"><i>0</i><i>3</i><i>0</i><i>7</i><i>0</i><i>3</i><i>0</i><i>0</i><i>1</i><i>0</i><i>0</i><i>3</i></div>
<div class="g" style="left:490px;top:356px;width:43px;text-align:center;color:#000"><b>项</b></div>
<div class="g" style="left:536px;top:356px;color:#000"><b>风</b><b>量</b><b>调</b><b>节</b><b>阀</b><i> </i><i>9</i><i>0</i><i>0</i><i>*</i><i>4</i><i>0</i><i>0</i></div>
<div class="g" style="left:706px;top:356px;width:73px;text-align:center;color:#000"><b>个</b></div>
<div class="g" style="left:779px;top:356px;width:70px;text-align:right;color:#000"><i>1</i></div>
<div class="g" style="left:852px;top:356px;width:70px;text-align:right;color:#000"><i>6</i><i>2</i><i>6</i><i>.</i><i>9</i><i>7</i></div>
<div class="g" style="left:925px;top:356px;width:70px;text-align:right;color:#000"><i>6</i><i>2</i><i>6</i><i>.</i><i>9</i><i>7</i></div>
<div class="g" style="left:998px;top:356px;width:70px;text-align:right;color:#000"><i>1</i></div>
<div class="g" style="left:1071px;top:356px;width:70px;text-align:right;color:#000"><i>6</i><i>2</i><i>6</i><i>.</i><i>9</i><i>7</i></div>
<div class="g" style="left:1144px;top:356px;width:70px;text-align:right;color:#000"><i>[</i><i>1</i><i>]</i></div>
<div class="g" style="left:1217px;top:356px;width:70px;text-align:right;color:#000"><i>6</i><i>2</i><i>6</i><i>.</i><i>9</i><i>7</i></div>
<div class="g" style="left:380px;top:379px;color:#000"><i>0</i><i>3</i><i>-</i><i>7</i><i>-</i><i>3</i><i>-</i><i>2</i><i>2</i></div>
<div class="g" style="left:490px;top:379px;width:43px;text-align:center;color:#000"><b>定</b></div>
<div class="g" style="left:536px;top:379px;color:#000"><b>风</b><b>量</b><b>调</b><b>节</b><b>阀</b><i> </i><i>9</i><i>0</i><i>0</i><i>*</i><i>4</i><i>0</i><i>0</i></div>
<div class="g" style="left:706px;top:379px;width:73px;text-align:center;color:#000"><b>个</b></div>
<div class="g" style="left:779px;top:379px;width:70px;text-align:right;color:#000"><i>1</i></div>
<div class="g" style="left:852px;top:379px;width:70px;text-align:right;color:#000"><i>6</i><i>2</i><i>6</i><i>.</i><i>9</i><i>7</i></div>
<div class="g" style="left:925px;top:379px;width:70px;text-align:right;color:#000"><i>6</i><i>2</i><i>6</i><i>.</i><i>9</i><i>7</i></div>
<div class="g" style="left:998px;top:379px;width:70px;text-align:right;color:#000"><i>1</i></div>
<div class="g" style="left:1071px;top:379px;width:70px;text-align:right;color:#000"><i>6</i><i>2</i><i>6</i><i>.</i><i>9</i><i>7</i></div>
<div class="g" style="left:1144px;top:379px;width:70px;text-align:right;color:#000"><i>1</i></div>
<div class="g" style="left:1217px;top:379px;width:70px;text-align:right;color:#000"><i>6</i><i>2</i><i>6</i><i>.</i><i>9</i><i>7</i></div>
<div class="g" style="left:380px;top:402px;color:#000"><i>0</i><i>3</i><i>0</i><i>7</i><i>0</i><i>3</i><i>0</i><i>0</i><i>1</i><i>0</i><i>0</i><i>4</i></div>
<div class="g" style="left:490px;top:402px;width:43px;text-align:center;color:#000"><b>项</b></div>
<div class="g" style="left:536px;top:402px;color:#000"><b>风</b><b>量</b><b>调</b><b>节</b><b>阀</b><i> </i><i>6</i><i>0</i><i>0</i><i>*</i><i>4</i><i>0</i><i>0</i></div>
<div class="g" style="left:706px;top:402px;width:73px;text-align:center;color:#000"><b>个</b></div>
<div class="g" style="left:779px;top:402px;width:70px;text-align:right;color:#000"><i>1</i></div>
<div class="g" style="left:852px;top:402px;width:70px;text-align:right;color:#000"><i>5</i><i>3</i><i>7</i><i>.</i><i>6</i><i>3</i></div>
<div class="g" style="left:925px;top:402px;width:70px;text-align:right;color:#000"><i>5</i><i>3</i><i>7</i><i>.</i><i>6</i><i>3</i></div>
<div class="g" style="left:998px;top:402px;width:70px;text-align:right;color:#000"><i>1</i></div>
<div class="g" style="left:1071px;top:402px;width:70px;text-align:right;color:#000"><i>5</i><i>3</i><i>7</i><i>.</i><i>6</i><i>3</i></div>
<div class="g" style="left:1144px;top:402px;width:70px;text-align:right;color:#000"><i>[</i><i>1</i><i>]</i></div>
<div class="g" style="left:1217px;top:402px;width:70px;text-align:right;color:#000"><i>5</i><i>3</i><i>7</i><i>.</i><i>6</i><i>3</i></div>
<div class="g" style="left:380px;top:425px;color:#000"><i>0</i><i>3</i><i>B</i><i>0</i><i>0</i><i>1</i></div>
<div class="g" style="left:490px;top:425px;width:43px;text-align:center;color:#000"><b>补</b><b>项</b></div>
<div class="g" style="left:536px;top:425px;color:#000"><b>原</b><b>有</b><b>设</b><b>备</b><b>、</b><b>风</b><b>管</b><b>拆</b><b>除</b></div>
<div class="g" style="left:706px;top:425px;width:73px;text-align:center;color:#000"><b>项</b></div>
<div class="g" style="left:779px;top:425px;width:70px;text-align:right;color:#000"><i>1</i></div>
<div class="g" style="left:852px;top:425px;width:70px;text-align:right;color:#000"><i>5</i><i>0</i><i>0</i><i>0</i><i>0</i></div>
<div class="g" style="left:925px;top:425px;width:70px;text-align:right;color:#000"><i>5</i><i>0</i><i>0</i><i>0</i><i>0</i></div>
<div class="g" style="left:998px;top:425px;width:70px;text-align:right;color:#000"><i>1</i></div>
<div class="g" style="left:1071px;top:425px;width:70px;text-align:right;color:#000"><i>5</i><i>0</i><i>0</i><i>0</i><i>0</i></div>
<div class="g" style="left:1144px;top:425px;width:70px;text-align:right;color:#000"><i>[</i><i>1</i><i>]</i></div>
<div class="g" style="left:1217px;top:425px;width:70px;text-align:right;color:#000"><i>5</i><i>0</i><i>0</i><i>0</i><i>0</i></div>
<div class="g" style="left:380px;top:448px;color:#000"><b>临</b><i>4</i></div>
<div class="g" style="left:490px;top:448px;width:43px;text-align:center;color:#000"><b>定</b></div>
<div class="g" style="left:536px;top:448px;color:#000"><b>原</b><b>有</b><b>设</b><b>备</b><b>、</b><b>风</b><b>管</b><b>拆</b><b>除</b></div>
<div class="g" style="left:706px;top:448px;width:73px;text-align:center;color:#000"><b>项</b></div>
<div class="g" style="left:779px;top:448px;width:70px;text-align:right;color:#000"><i>1</i></div>
<div class="g" style="left:852px;top:448px;width:70px;text-align:right;color:#000"><i>5</i><i>0</i><i>0</i><i>0</i><i>0</i></div>
<div class="g" style="left:925px;top:448px;width:70px;text-align:right;color:#000"><i>5</i><i>0</i><i>0</i><i>0</i><i>0</i></div>
<div class="g" style="left:998px;top:448px;width:70px;text-align:right;color:#000"><i>1</i></div>
<div class="g" style="left:1071px;top:448px;width:70px;text-align:right;color:#000"><i>5</i><i>0</i><i>0</i><i>0</i><i>0</i></div>
<div class="g" style="left:1144px;top:448px;width:70px;text-align:right;color:#000"><i>1</i></div>
<div class="g" style="left:1217px;top:448px;width:70px;text-align:right;color:#000"><i>5</i><i>0</i><i>0</i><i>0</i><i>0</i></div>
<div class="g" style="left:490px;top:471px;width:43px;text-align:center;color:#000"><b>部</b></div>
<div class="g" style="left:490px;top:499px;width:43px;text-align:center;color:#000"><b>部</b></div>
<div class="g" style="left:536px;top:499px;color:#000"><b>厨</b><b>房</b><b>排</b><b>烟</b><b>系</b><b>统</b><b>新</b><b>增</b></div>
<div class="g" style="left:925px;top:499px;width:70px;text-align:right;color:#000"><i>1</i><i>3</i><i>1</i><i>1</i><i>0</i></div>
<div class="g" style="left:1071px;top:499px;width:70px;text-align:right;color:#000"><i>1</i><i>3</i><i>1</i><i>1</i><i>0</i></div>
<div class="g" style="left:1217px;top:499px;width:70px;text-align:right;color:#000"><i>4</i><i>2</i><i>6</i><i>8</i></div>
<div style="left:343px;top:213px;width:1px;height:292px;background:#f39a3a"></div>
<div style="left:353px;top:213px;width:1px;height:218px;background:#f39a3a"></div>
<div style="left:354px;top:223px;width:4px;height:1px;background:#f39a3a"></div>
<svg style="left:357px;top:217px" width="13" height="13"><rect x="0.5" y="0.5" width="12" height="12" fill="#fff" stroke="#888"/><path d="M3 6.5H10M6.5 3V10" stroke="#222" stroke-width="1.2"/></svg>
<div style="left:354px;top:246px;width:4px;height:1px;background:#f39a3a"></div>
<svg style="left:357px;top:240px" width="13" height="13"><rect x="0.5" y="0.5" width="12" height="12" fill="#fff" stroke="#888"/><path d="M3 6.5H10M6.5 3V10" stroke="#222" stroke-width="1.2"/></svg>
<div style="left:354px;top:269px;width:4px;height:1px;background:#f39a3a"></div>
<svg style="left:357px;top:263px" width="13" height="13"><rect x="0.5" y="0.5" width="12" height="12" fill="#fff" stroke="#888"/><path d="M3 6.5H10M6.5 3V10" stroke="#222" stroke-width="1.2"/></svg>
<div style="left:354px;top:292px;width:4px;height:1px;background:#f39a3a"></div>
<svg style="left:357px;top:286px" width="13" height="13"><rect x="0.5" y="0.5" width="12" height="12" fill="#fff" stroke="#888"/><path d="M3 6.5H10M6.5 3V10" stroke="#222" stroke-width="1.2"/></svg>
<div style="left:354px;top:315px;width:4px;height:1px;background:#f39a3a"></div>
<svg style="left:357px;top:309px" width="13" height="13"><rect x="0.5" y="0.5" width="12" height="12" fill="#fff" stroke="#888"/><path d="M3 6.5H10M6.5 3V10" stroke="#222" stroke-width="1.2"/></svg>
<div style="left:354px;top:338px;width:4px;height:1px;background:#f39a3a"></div>
<svg style="left:357px;top:332px" width="13" height="13"><rect x="0.5" y="0.5" width="12" height="12" fill="#fff" stroke="#888"/><path d="M3 6.5H10M6.5 3V10" stroke="#222" stroke-width="1.2"/></svg>
<div style="left:354px;top:361px;width:4px;height:1px;background:#f39a3a"></div>
<svg style="left:357px;top:355px" width="13" height="13"><rect x="0.5" y="0.5" width="12" height="12" fill="#fff" stroke="#888"/><path d="M3 6.5H10" stroke="#222" stroke-width="1.2"/></svg>
<div style="left:354px;top:407px;width:4px;height:1px;background:#f39a3a"></div>
<svg style="left:357px;top:401px" width="13" height="13"><rect x="0.5" y="0.5" width="12" height="12" fill="#fff" stroke="#888"/><path d="M3 6.5H10M6.5 3V10" stroke="#222" stroke-width="1.2"/></svg>
<div style="left:354px;top:430px;width:4px;height:1px;background:#f39a3a"></div>
<svg style="left:357px;top:424px" width="13" height="13"><rect x="0.5" y="0.5" width="12" height="12" fill="#fff" stroke="#888"/><path d="M3 6.5H10" stroke="#222" stroke-width="1.2"/></svg>
<div style="left:363px;top:368px;width:1px;height:17px;background:#f39a3a"></div>
<div style="left:363px;top:384px;width:4px;height:1px;background:#f39a3a"></div>
<div style="left:367px;top:378px;width:10px;height:13px;overflow:hidden"><svg style="left:0;top:0" width="13" height="13"><rect x="0.5" y="0.5" width="12" height="12" fill="#fff" stroke="#888"/><path d="M3 6.5H10M6.5 3V10" stroke="#222" stroke-width="1.2"/></svg></div>
<div style="left:363px;top:437px;width:1px;height:17px;background:#f39a3a"></div>
<div style="left:363px;top:453px;width:14px;height:1px;background:#f39a3a"></div>
<div style="left:343px;top:476px;width:17px;height:1px;background:#f39a3a"></div>
<div style="left:343px;top:504px;width:4px;height:1px;background:#f39a3a"></div>
<svg style="left:347px;top:498px" width="13" height="13"><rect x="0.5" y="0.5" width="12" height="12" fill="#fff" stroke="#888"/><path d="M3 6.5H10" stroke="#222" stroke-width="1.2"/></svg>
<div style="left:353px;top:511px;width:1px;height:11px;background:#f39a3a"></div>
<div class="g" style="left:364px;top:492px;color:#222"><i>B</i></div>
<div class="g" style="left:364px;top:506px;color:#222"><i>2</i></div>
<div style="left:778px;top:153px;width:230px;height:69px;border:6px solid #f44f52;border-radius:4px"></div>
<div style="left:784px;top:411px;width:228px;height:56px;border:6px solid #f44f52;border-radius:4px"></div><script>(function(){var c=document.createElement('canvas').getContext('2d');c.font="100px 'Liberation Sans'";if(c.measureText('\u4e2d').width<90)document.body.className='nf';})();</script></body></html>
